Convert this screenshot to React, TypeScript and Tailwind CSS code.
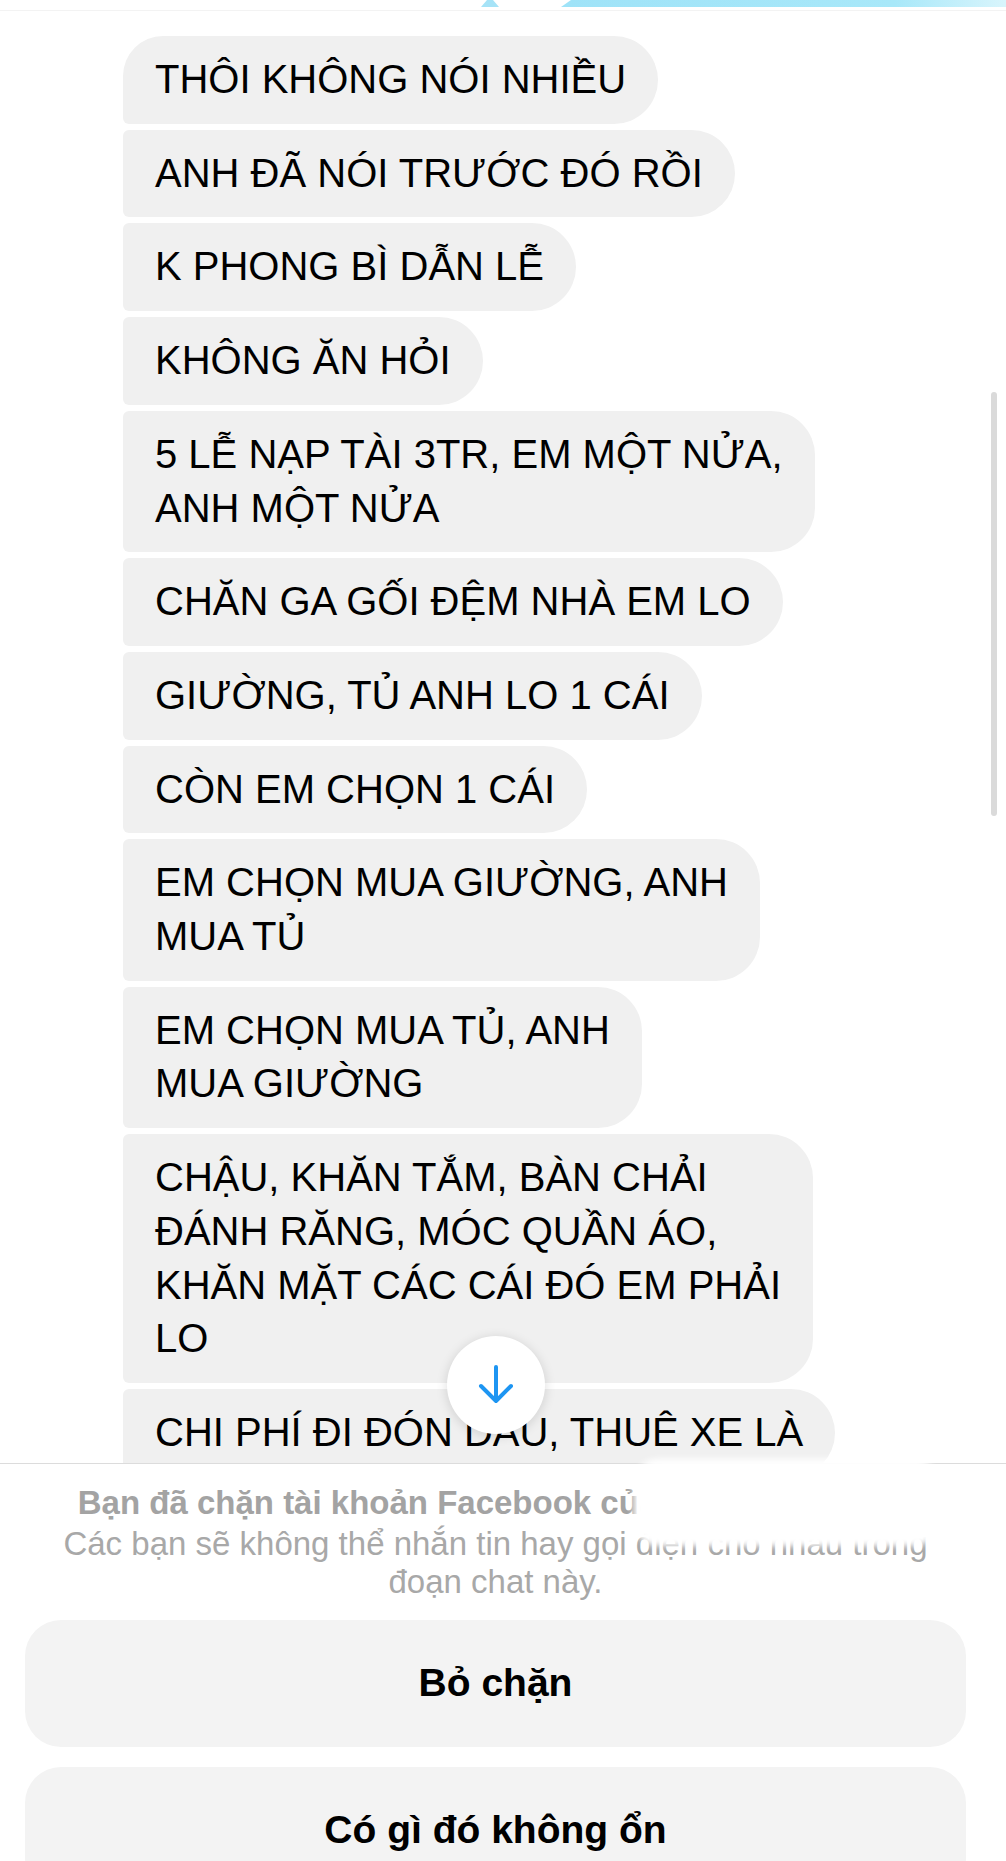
import React from 'react';

type Msg = { id: number; lines: string[] };

const messages: Msg[] = [
  { id: 1, lines: ['THÔI KHÔNG NÓI NHIỀU'] },
  { id: 2, lines: ['ANH ĐÃ NÓI TRƯỚC ĐÓ RỒI'] },
  { id: 3, lines: ['K PHONG BÌ DẪN LỄ'] },
  { id: 4, lines: ['KHÔNG ĂN HỎI'] },
  { id: 5, lines: ['5 LỄ NẠP TÀI 3TR, EM MỘT NỬA,', 'ANH MỘT NỬA'] },
  { id: 6, lines: ['CHĂN GA GỐI ĐỆM NHÀ EM LO'] },
  { id: 7, lines: ['GIƯỜNG, TỦ ANH LO 1 CÁI'] },
  { id: 8, lines: ['CÒN EM CHỌN 1 CÁI'] },
  { id: 9, lines: ['EM CHỌN MUA GIƯỜNG, ANH', 'MUA TỦ'] },
  { id: 10, lines: ['EM CHỌN MUA TỦ, ANH', 'MUA GIƯỜNG'] },
  {
    id: 11,
    lines: ['CHẬU, KHĂN TẮM, BÀN CHẢI', 'ĐÁNH RĂNG, MÓC QUẦN ÁO,', 'KHĂN MẶT CÁC CÁI ĐÓ EM PHẢI', 'LO'],
  },
  { id: 12, lines: ['CHI PHÍ ĐI ĐÓN DÂU, THUÊ XE LÀ'] },
];

const Bubble = ({ msg, first }: { msg: Msg; first: boolean }) => (
  <div
    className={
      first
        ? 'bg-[#f0f0f0] rounded-tl-[40px] rounded-bl-[6px] rounded-r-[44px] px-8 py-[17px] text-[40px] leading-[53.7px] text-black whitespace-nowrap'
        : 'bg-[#f0f0f0] rounded-tl-[6px] rounded-bl-[6px] rounded-r-[44px] px-8 py-[17px] text-[40px] leading-[53.7px] text-black whitespace-nowrap'
    }
  >
    {msg.lines.map((line, i) => (
      <div key={i}>{line}</div>
    ))}
  </div>
);

const App = () => {
  return (
    <div className="relative w-[1006px] h-[1861px] overflow-hidden bg-white font-['Liberation_Sans',Arial,sans-serif]">
      {/* Chat area */}
      <div className="h-[1463px] overflow-hidden flex flex-col">
        <svg width="1006" height="7" viewBox="0 0 1006 7" className="block shrink-0">
          <defs>
            <linearGradient id="topbar" x1="0" x2="1" y1="0" y2="0">
              <stop offset="0" stopColor="#9fe3f8" />
              <stop offset="0.75" stopColor="#a8e8f9" />
              <stop offset="1" stopColor="#d9f5fc" />
            </linearGradient>
          </defs>
          <polygon points="481,7 499,7 493,0 487,0" fill="#a6e3f7" />
          <polygon points="561,7 1006,7 1006,0 571,0" fill="url(#topbar)" />
        </svg>
        <div className="h-px mt-[3px] bg-[#f3f3f3] shrink-0" />

        <div className="flex flex-col items-start gap-[6px] pl-[123px] pt-[25px]">
          {messages.map((m, i) => (
            <Bubble key={m.id} msg={m} first={i === 0} />
          ))}
        </div>
      </div>

      {/* Scroll indicator */}
      <div className="absolute right-[9px] top-[392px] w-[6px] h-[424px] rounded-full bg-[#dadada]" />

      {/* Jump to latest */}
      <div className="absolute left-[447px] top-[1336px] w-[98px] h-[98px] rounded-full bg-white shadow-[0_2px_12px_rgba(0,0,0,0.14)] flex items-center justify-center">
        <svg width="40" height="44" viewBox="0 0 40 44" fill="none">
          <path
            d="M20 4 V38 M5 23 L20 38 L35 23"
            stroke="#1d95f2"
            strokeWidth="4"
            strokeLinecap="round"
            strokeLinejoin="round"
          />
        </svg>
      </div>

      {/* Blocked panel */}
      <div className="relative border-t border-[#dcdcdc] pt-[19px] pl-[25px] pr-[40px]">
        <div className="text-center text-[33px]">
          <p className="flex justify-center font-bold text-[#a3a3a3] leading-[40px]">
            <span>Bạn đã chặn tài khoản Facebook của</span>
            <span className="w-[256px]" />
          </p>
          <p className="mt-[2px] text-[#a8a8a8] leading-[38px]">
            Các bạn sẽ không thể nhắn tin hay gọi điện cho nhau trong
            <br />
            đoạn chat này.
          </p>
        </div>

        <div className="absolute left-[634px] top-[-5px] w-[304px] h-[87px] rounded-[24px] bg-white blur-[3px]" />

        <div className="mt-[19px] flex flex-col gap-[20px]">
          <button className="h-[127px] rounded-[36px] bg-[#f3f3f3] text-[39px] font-bold text-black">
            Bỏ chặn
          </button>
          <button className="h-[127px] rounded-[36px] bg-[#f3f3f3] text-[39px] font-bold text-black">
            Có gì đó không ổn
          </button>
        </div>
      </div>
    </div>
  );
};

export default App;
